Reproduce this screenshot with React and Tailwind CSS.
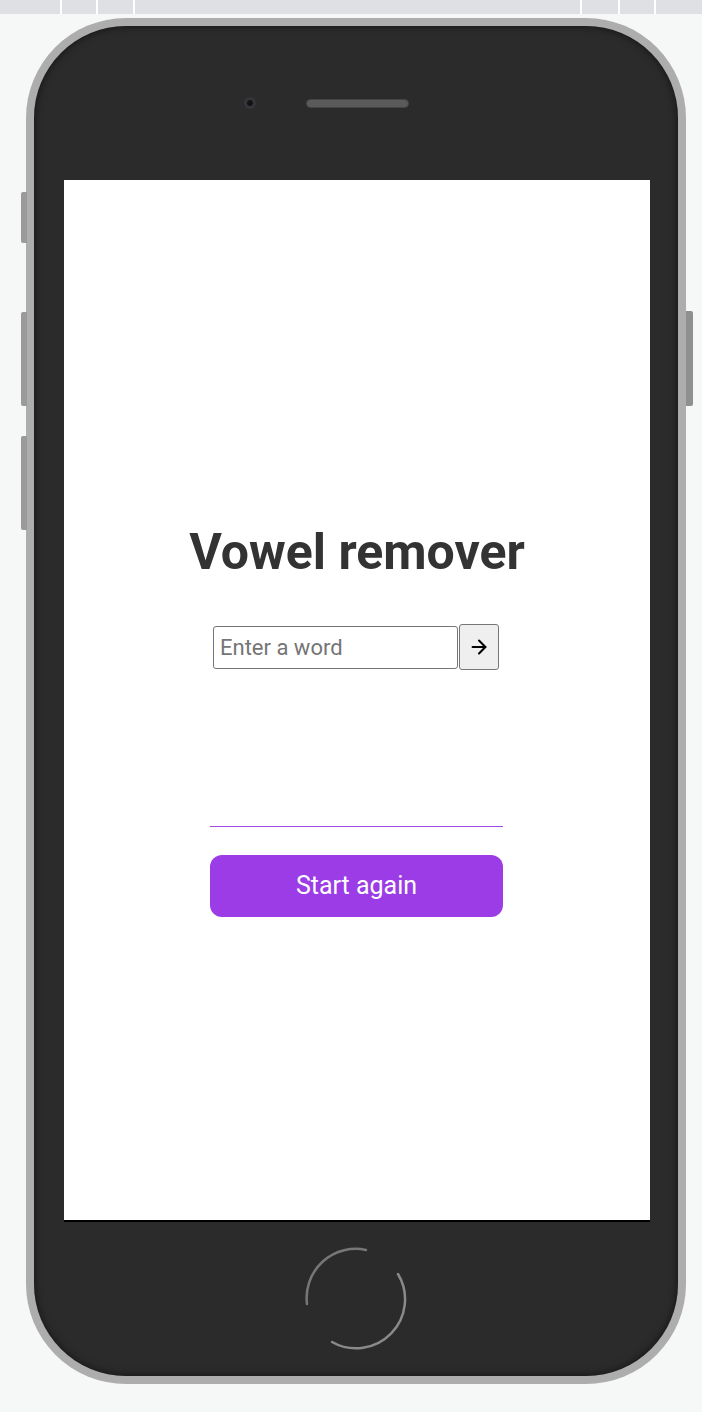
import React from "react";
import { ArrowRight } from "lucide-react";

export default function App() {
  return (
    <div className="w-[702px] h-[1412px] bg-[#f6f7f7] overflow-hidden" style={{ fontFamily: "Roboto, 'Noto Sans', sans-serif" }}>
      {/* top toolbar strip */}
      <div className="h-[14px] bg-[#dfe0e4] flex">
        <div className="w-[60px]" />
        <div className="w-[2px] bg-white" />
        <div className="w-[34px]" />
        <div className="w-[2px] bg-white" />
        <div className="w-[35px]" />
        <div className="w-[2px] bg-white" />
        <div className="w-[445px]" />
        <div className="w-[2px] bg-white" />
        <div className="w-[36px]" />
        <div className="w-[2px] bg-white" />
        <div className="w-[34px]" />
        <div className="w-[2px] bg-white" />
      </div>

      {/* phone */}
      <div className="relative ml-[26px] mt-[4px] w-[660px] h-[1366px]">
        {/* side buttons */}
        <div className="absolute left-[-5px] top-[174px] w-[6px] h-[51px] rounded-l-[2px] bg-[#9a9a9a]" />
        <div className="absolute left-[-5px] top-[294px] w-[6px] h-[94px] rounded-l-[2px] bg-[#9a9a9a]" />
        <div className="absolute left-[-5px] top-[418px] w-[6px] h-[94px] rounded-l-[2px] bg-[#9a9a9a]" />
        <div className="absolute right-[-7px] top-[293px] w-[7px] h-[95px] rounded-r-[2px] bg-[#8f8f8f]" />

        <div className="w-full h-full rounded-[100px] bg-[#adadad] p-[8px]">
          <div className="w-full h-full rounded-[92px] bg-[#2b2b2b] shadow-[inset_0_0_8px_rgba(0,0,0,0.6)] flex flex-col">
            {/* top area */}
            <div className="h-[154px] flex items-start pt-[71px]">
              <div className="ml-[210px] w-[12px] h-[12px] rounded-full bg-[#141416] border-[3px] border-[#35353a]" />
              <div className="ml-[50px] mt-[2px] w-[103px] h-[9px] rounded-full bg-[#5a5a5a] border border-[#454545]" />
            </div>

            {/* screen */}
            <div className="ml-[30px] w-[586px] h-[1042px] bg-white border-b-2 border-black flex flex-col items-center pt-[347px]">
              <h1 className="text-[50px] leading-none font-bold text-[#333333]">Vowel remover</h1>
              <div className="mt-[47px] mr-[2px] flex items-center gap-[1px]">
                <input
                  type="text"
                  placeholder="Enter a word"
                  className="w-[245px] h-[43px] border border-[#767676] rounded-[3px] px-[6px] text-[22px] text-[#333] placeholder:text-[#757575] outline-none"
                  style={{ fontFamily: "Roboto, sans-serif" }}
                />
                <button className="w-[40px] h-[46px] bg-[#efefef] border border-[#767676] rounded-[3px] flex items-center justify-center text-black">
                  <ArrowRight size={22} strokeWidth={2.2} />
                </button>
              </div>
              <div className="mt-[156px] mr-[1px] w-[293px] h-px bg-[#a24be9]" />
              <button className="mt-[28px] mr-[1px] w-[293px] h-[62px] rounded-[12px] bg-[#9b3ce6] text-white text-[25px]">
                Start again
              </button>
            </div>

            {/* home button */}
            <div className="flex justify-center pt-[25px] pr-[1px]">
              <svg width="104" height="104" viewBox="0 0 104 104">
                <path d="M 3 57 A 49 49 0 0 1 62 3" fill="none" stroke="#777" strokeWidth="2.5" strokeLinecap="round" />
                <path d="M 94 27 A 49 49 0 0 1 28 95" fill="none" stroke="#8a8a8a" strokeWidth="2.5" strokeLinecap="round" />
              </svg>
            </div>
          </div>
        </div>
      </div>
    </div>
  );
}
